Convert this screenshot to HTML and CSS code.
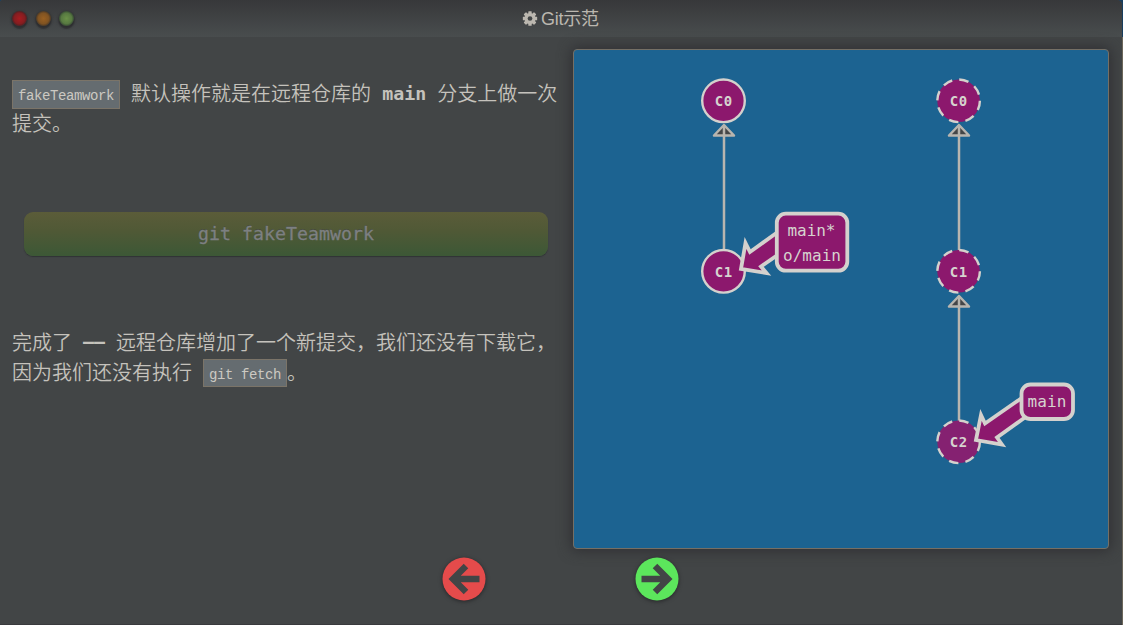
FILE: index.html
```html
<!DOCTYPE html>
<html lang="zh-CN">
<head>
<meta charset="utf-8">
<title>Git示范</title>
<link rel="stylesheet" href="styles.css">
</head>
<body>
<div class="window">
  <header class="titlebar">
    <div class="lights"><i class="light red"></i><i class="light amber"></i><i class="light green"></i></div>
    <h1 class="title">
      <svg class="gear" viewBox="-8 -8 16 16"><g fill="currentColor"><g id="teeth"><rect x="-1.8" y="-7.8" width="3.6" height="15.6" rx=".6"/><rect x="-7.8" y="-1.8" width="15.6" height="3.6" rx=".6"/></g><use href="#teeth" transform="rotate(45)"/></g><circle r="4.2" fill="none" stroke="currentColor" stroke-width="3.4"/><circle r="2.5" fill="#424546"/></svg>
      <span>Git示范</span>
    </h1>
  </header>
  <main class="content">
    <section class="lesson">
      <p class="before"><code class="chip">fakeTeamwork</code> 默认操作就是在远程仓库的 <strong class="mono">main</strong> 分支上做一次提交。</p>
      <button class="command">git fakeTeamwork</button>
      <p class="after">完成了 <span class="mono dash">——</span> 远程仓库增加了一个新提交，我们还没有下载它，因为我们还没有执行 <code class="chip">git fetch</code>。</p>
    </section>
    <section class="canvas">
      <svg class="graph" viewBox="574 50 534 498">
        <defs>
          <path id="head" d="M0 0 L-10 10.5 H10 Z"/>
        </defs>
        <g class="edges">
          <use href="#head" x="724" y="125"/><path d="M724 125V250"/>
          <use href="#head" x="959" y="125"/><path d="M959 125V250"/>
          <use href="#head" x="959" y="296"/><path d="M959 296V421"/>
        </g>
        <g class="nodes">
          <circle cx="723.5" cy="100.8" r="21.3"/><circle cx="723.5" cy="271.3" r="21.3"/>
          <g class="remote">
            <circle cx="958.6" cy="100.8" r="21.3"/><circle cx="958.6" cy="271.3" r="21.3"/><circle class="latest" cx="958.6" cy="441.8" r="21.3"/>
          </g>
        </g>
        <g class="node-text">
          <text x="723.5" y="106" textLength="17.5">C0</text><text x="723.5" y="276.5" textLength="17.5">C1</text>
          <text x="958.5" y="106" textLength="17.5">C0</text><text x="958.5" y="276.5" textLength="17.5">C1</text><text x="958.5" y="447" textLength="17.5">C2</text>
        </g>
        <g class="refs">
          <path d="M782 229L750 252L745.5 243L741 269L766.5 273L761 266.500L782 252Z"/>
          <rect x="776.800" y="213.700" width="70.500" height="57" rx="9"/>
          <path d="M1026 395L985 423.500L981 415L976 440L1002 444.500L997 437.500L1034 411Z"/>
          <rect x="1021.500" y="384.500" width="51.500" height="34.500" rx="9"/>
        </g>
        <g class="ref-text">
          <text x="811.5" y="235.800" textLength="48">main*</text>
          <text x="812" y="260.800" textLength="58">o/main</text>
          <text x="1047" y="406.800" textLength="39">main</text>
        </g>
      </svg>
    </section>
  </main>
  <nav class="controls">
    <svg class="nav prev" viewBox="-22 -22 44 44"><circle r="21.5"/><path d="M15.500 0H-11M2 -13L-11 0L2 13"/></svg>
    <svg class="nav next" viewBox="-22 -22 44 44"><circle r="21.5"/><path d="M-15.500 0H11M-2 -13L11 0L-2 13"/></svg>
  </nav>
</div>
</body>
</html>
```

FILE: styles.css
```css
* { box-sizing: border-box; }
body { margin: 0; background: linear-gradient(#183e5e 37px, #6b665a 37px); overflow: hidden; }
.window { width: 1122px; height: 625px; display: flex; flex-direction: column; background: #424546; border-radius: 3px 5px 0 0; border-bottom: 1px solid #393a3d; overflow: hidden; }
.titlebar { height: 37px; flex: none; display: grid; grid-template-columns: 1fr auto 1fr; align-items: center; background: linear-gradient(#37383a, #494d4e); }
.lights { display: flex; gap: 9px; padding-left: 12px; }
.light { width: 15px; height: 15px; border-radius: 50%; box-shadow: 0 1px 2px 1px #29292bb0, 0 3px 1px #29292b80; }
.red { background: radial-gradient(circle at 50% 50%, #a51c20, #861d20 50%, #452023 75%); }
.amber { background: radial-gradient(circle at 50% 50%, #996021, #805322 50%, #403427 75%); }
.green { background: radial-gradient(circle at 50% 50%, #6a9048, #577941 50%, #304030 75%); margin-left: -1px; }
.title { margin: 0; display: flex; align-items: center; gap: 4px; font: 18px/36px "Liberation Sans", "Noto Sans CJK SC", sans-serif; color: #bbb7af; letter-spacing: -.25px; transform: translateX(-.5px); }
.gear { width: 15px; height: 15px; }
.content { display: flex; height: 512px; flex: none; padding: 12px 13px 0 12px; }
.lesson { width: 561px; padding-right: 12px; font: 350 20px/30px "Noto Sans CJK SC", sans-serif; color: #c5c2bc; }
.lesson p { margin: 0; word-spacing: 6.6px; }
.lesson .before { padding-top: 29px; height: 163px; }
.chip { display: inline-block; height: 28px; padding: 0 5px; border: 1px solid #7b7468; background: #656c70; font: 14px/31px "Liberation Mono", monospace; letter-spacing: -.4px; word-spacing: 0; color: #ccc9c2; vertical-align: 1px; margin: -5px 0; }
.before .chip { height: 29px; }
.mono { font-family: "DejaVu Sans Mono", monospace; font-size: 18.270px; line-height: 20px; }
strong.mono { font-weight: bold; vertical-align: 1px; }
.dash { vertical-align: 2px; font-weight: bold; }
.command { display: block; width: 524px; height: 44px; margin: 0 0 1px 12px; padding: 0 0 1px; border: 0; border-radius: 9px; background: linear-gradient(#5b5c39, #505936 42%, #3c5836); box-shadow: 0 1px 1px #303235; color: #7d8081; font: 18.270px/43px "DejaVu Sans Mono", monospace; text-shadow: 0 -1px #454a3b; -webkit-text-stroke: .3px #7d8081; }
.lesson .after { padding-top: 70px; }
.canvas { width: 536px; height: 500px; border: 1px solid #756f65; border-radius: 4px; background: #1c6391; box-shadow: 0 0 13px 2px #303033; }
.graph { display: block; width: 534px; height: 498px; }
.edges { fill: #444648; stroke: #b8b5af; stroke-width: 2.5; stroke-linejoin: round; }
.nodes { fill: #8c186d; stroke: #d4d1cd; stroke-width: 2.4; }
.remote { stroke-dasharray: 9.560 7.170; }
.latest { fill: #852171; }
.refs { fill: #8c186d; stroke: #d4d1cd; stroke-width: 3.8; }
.node-text, .ref-text { fill: #d6d3cf; text-anchor: middle; font-family: "DejaVu Sans Mono", monospace; }
.node-text { font-size: 14px; font-weight: bold; }
.ref-text { font-size: 16px; }
.controls { display: flex; gap: 149px; padding: 8px 0 0 442px; }
.nav { width: 44px; height: 44px; filter: drop-shadow(0 1px 2px #242527); }
.nav path { fill: none; stroke: #424546; stroke-width: 6.4; stroke-linejoin: miter; }
.prev { fill: #e54b4b; }
.next { fill: #5ce65c; }
```
